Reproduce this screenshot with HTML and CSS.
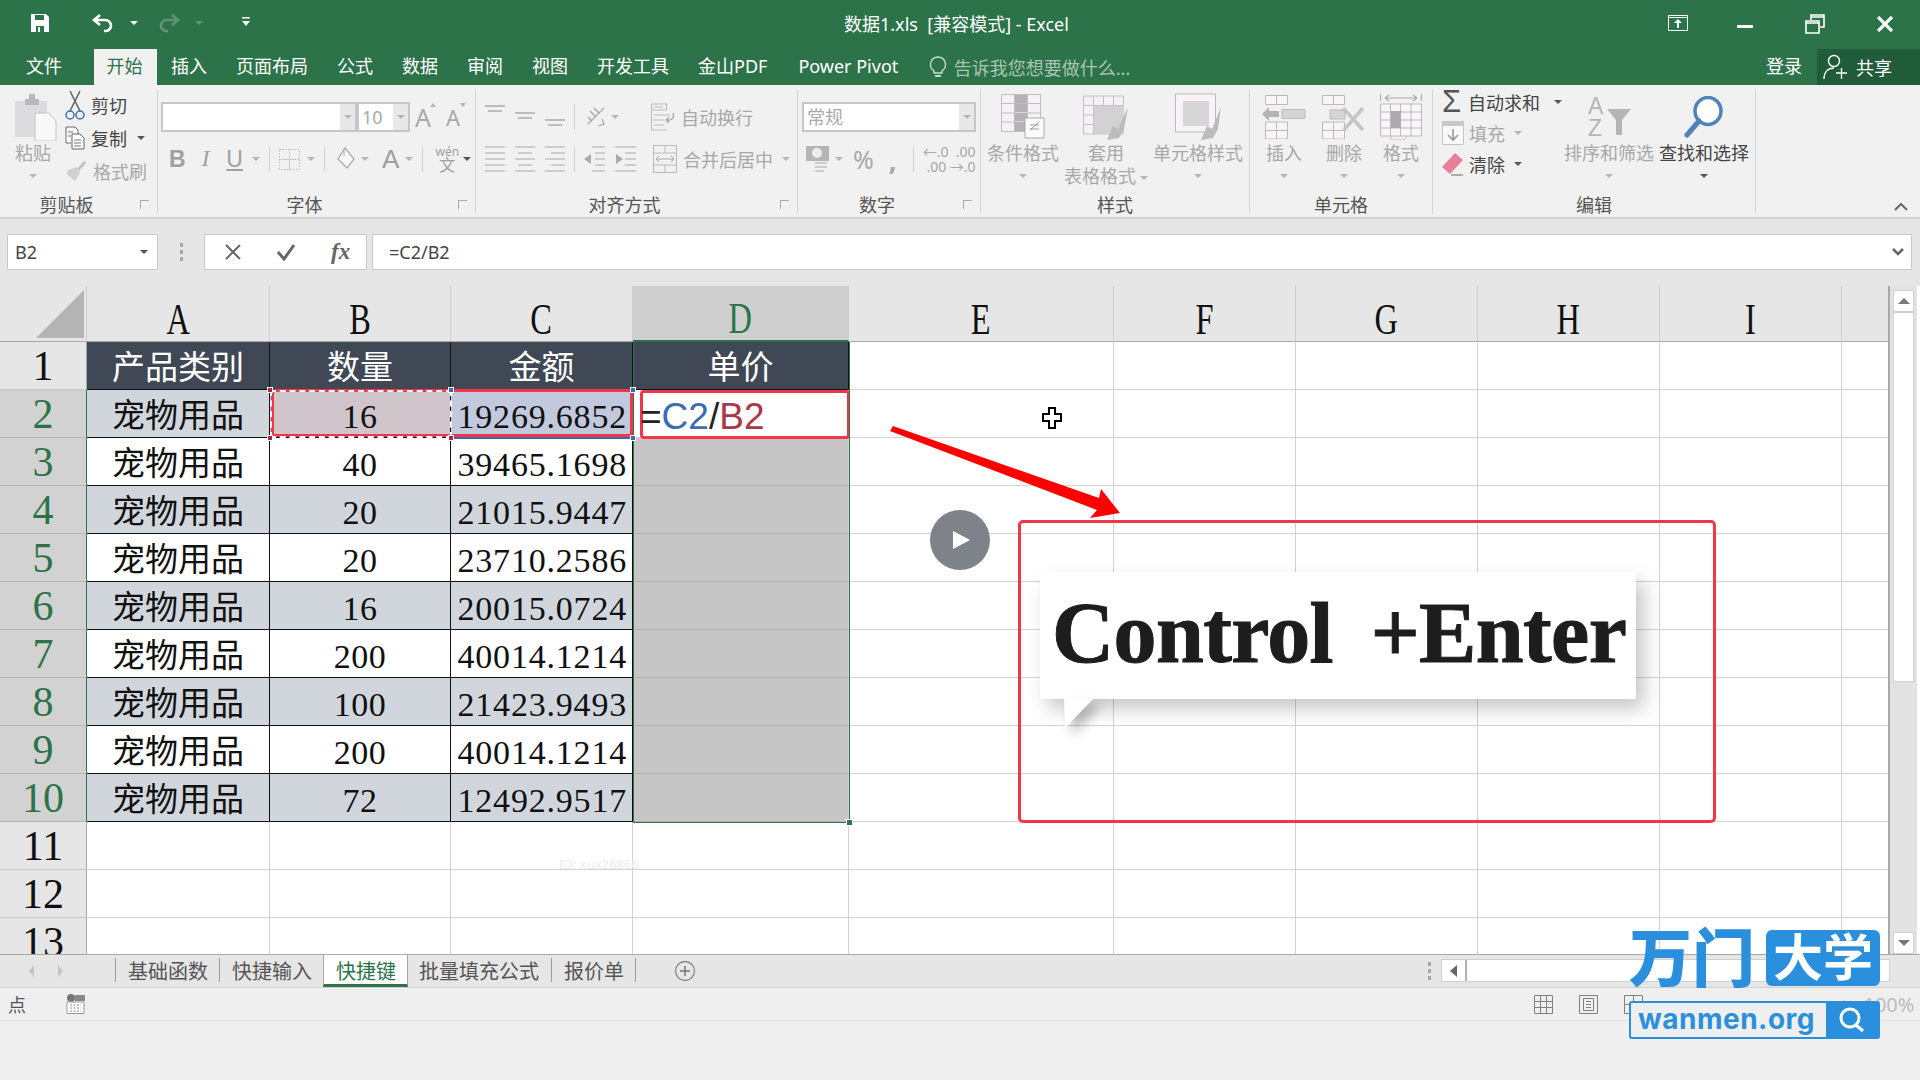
FILE: index.html
```html
<!DOCTYPE html>
<html lang="zh-CN">
<head>
  <meta charset="UTF-8">
  <title>数据1.xls - Excel</title>
  <link rel="stylesheet" href="styles.css">
</head>
<body>
  <!-- title bar -->
  <div class="titlebar">
    <div class="qat">
      <svg class="qat-save" width="20" height="20" viewBox="0 0 20 20"><path d="M1 1h15l3 3v15H1z" fill="#fff"/><path d="M5 2h9v5H5z" fill="#2d734a"/><path d="M6 13h8v6H6z" fill="#2d734a"/><path d="M8 14h2v5H8z" fill="#fff"/></svg>
      <svg class="qat-undo" width="24" height="20" viewBox="0 0 24 20"><path d="M9 2L3 7l6 5M3 7h11c4 0 6 3 6 5.500S18 18 15 18h-2" fill="none" stroke="#fff" stroke-width="2.600"/></svg>
      <span class="caret white qat-c1"></span>
      <svg class="qat-redo" width="24" height="20" viewBox="0 0 24 20"><path d="M15 2l6 5-6 5M21 7H10c-4 0-6 3-6 5.500S6 18 9 18h2" fill="none" stroke="#5f9476" stroke-width="2.600"/></svg>
      <span class="caret dim qat-c2"></span>
      <svg class="qat-more" width="10" height="12" viewBox="0 0 10 12"><path d="M1 1h8v1.500H1z" fill="#fff"/><path d="M1 5h8L5 10z" fill="#fff"/></svg>
    </div>
    <div class="doc-title">数据1.xls&nbsp; [兼容模式] - Excel</div>
    <div class="win-btns">
      <svg class="win-display" width="20" height="16" viewBox="0 0 20 16"><path d="M.5.500h19v15H.5zM.5 2.500h19" fill="none" stroke="#fff"/><path d="M10 4l4 4h-3v5H9V8H6z" fill="#fff"/></svg>
      <svg class="win-min" width="16" height="4" viewBox="0 0 16 4"><path d="M0 0h16v3H0z" fill="#fff"/></svg>
      <svg class="win-restore" width="20" height="20" viewBox="0 0 20 20"><path d="M1 7h13v12H1zM1 9h13M6 6V1h13v12h-4M6 3h13" fill="none" stroke="#fff" stroke-width="1.600"/></svg>
      <svg class="win-close" width="16" height="16" viewBox="0 0 16 16"><path d="M1 1l14 14M15 1L1 15" stroke="#fff" stroke-width="3.200"/></svg>
    </div>
  </div>

  <div class="tabrow">
    <span class="tab">文件</span>
    <span class="tab active">开始</span>
    <span class="tab">插入</span>
    <span class="tab">页面布局</span>
    <span class="tab">公式</span>
    <span class="tab">数据</span>
    <span class="tab">审阅</span>
    <span class="tab">视图</span>
    <span class="tab">开发工具</span>
    <span class="tab">金山PDF</span>
    <span class="tab pivot">Power Pivot</span>
    <span class="tell">
      <svg width="18" height="22" viewBox="0 0 18 22"><path d="M9 1a7.500 7.500 0 0 0-4 13.800V17h8v-2.200A7.500 7.500 0 0 0 9 1z" fill="none" stroke="#c9d9cf" stroke-width="1.400"/><path d="M6 19h6v2H6z" fill="#c9d9cf"/></svg>
      告诉我您想要做什么...
    </span>
    <span class="login">登录</span>
    <span class="share">
      <svg width="25" height="26" viewBox="0 0 25 26"><circle cx="11" cy="7" r="5.500" fill="none" stroke="#fff" stroke-width="1.400"/><path d="M1 25c0-7 4-11 10-11M13 19h11M18.500 14v11" fill="none" stroke="#fff" stroke-width="1.400"/></svg>
      共享
    </span>
  </div>

  <!-- ribbon -->
  <div class="ribbon">
    <div class="group g-clip">
      <div class="group-body">
        <div class="big paste off">
          <div class="big-icon">
            <svg width="42" height="48" viewBox="0 0 42 48"><path d="M0 8h32v36H0z" fill="#dcdcdf"/><path d="M10 6h4V1h6v5h4v6H10z" fill="#b9b9bb"/><path d="M20 20h14l7 8v20H20z" fill="#f8f8f8" stroke="#c4c4c4"/></svg>
          </div>
          <div class="big-text">粘贴</div>
          <span class="caret"></span>
        </div>
        <div class="stack">
          <div class="mini on">
            <svg width="20" height="30" viewBox="0 0 20 30"><path d="M5 1l10 20M15 1L5 21" stroke="#666" stroke-width="1.600"/><circle cx="5" cy="25" r="4" fill="none" stroke="#3c6fb4" stroke-width="1.500"/><circle cx="15" cy="25" r="4" fill="none" stroke="#3c6fb4" stroke-width="1.500"/></svg>
            剪切
          </div>
          <div class="mini on">
            <svg width="20" height="24" viewBox="0 0 20 24"><path d="M1 1h9l3 3v4M1 1v16h5" fill="#fff" stroke="#666"/><path d="M7 8h8l4 4v11H7z" fill="#fff" stroke="#666"/><path d="M9 14h7M9 17h7M9 20h7M3 6h5M3 10h3" stroke="#777"/></svg>
            复制
            <span class="caret dark"></span>
          </div>
          <div class="mini off">
            <svg width="22" height="22" viewBox="0 0 22 22"><path d="M12 9l7-8 2 2-7 8z" fill="#c2c2c2"/><path d="M3 10l8-3 4 6-5 8-8-7z" fill="#d0d0d0"/></svg>
            格式刷
          </div>
        </div>
      </div>
      <div class="group-label launch">剪贴板<span class="launcher"></span></div>
    </div>

    <div class="group g-font">
      <div class="group-body rows">
        <div class="line">
          <div class="combo font-combo"><span class="combo-val"></span><span class="combo-btn"><span class="caret"></span></span></div>
          <div class="combo size-combo"><span class="combo-val">10</span><span class="combo-btn"><span class="caret"></span></span></div>
          <span class="glyph grow">A<i class="tri up"></i></span>
          <span class="glyph shrink">A<i class="tri down"></i></span>
        </div>
        <div class="line second">
          <b class="fmt b">B</b>
          <i class="fmt i">I</i>
          <u class="fmt u">U</u>
          <span class="caret"></span>
          <span class="vsep"></span>
          <svg class="border-ic" width="21" height="21" viewBox="0 0 21 21"><path d="M.5.500h20v20H.5zM.5 10.500h20M10.500.500v20" fill="none" stroke="#bbb" stroke-dasharray="1.500 1.500"/><path d="M10.500 6v15M5 10.500h11" stroke="#c8c8c8"/></svg>
          <span class="caret"></span>
          <span class="vsep"></span>
          <svg class="fill-ic" width="20" height="24" viewBox="0 0 20 24"><path d="M9 1l9 11-7 9-9-9z" fill="#f8f8f8" stroke="#aaa" stroke-width="1.300"/><path d="M8 2v7" stroke="#aaa"/></svg>
          <span class="caret"></span>
          <span class="fmt acolor">A</span>
          <span class="caret"></span>
          <span class="vsep"></span>
          <span class="wen"><em>wén</em>文</span>
          <span class="caret dark"></span>
        </div>
      </div>
      <div class="group-label launch">字体<span class="launcher"></span></div>
    </div>

    <div class="group g-align">
      <div class="group-body rows">
        <div class="line">
          <svg width="80" height="26" viewBox="0 0 80 26"><path d="M0 2h20M3 7h14M30 9h20M33 14h14M60 16h20M63 21h14" stroke="#aaa" stroke-width="1.300"/></svg>
          <span class="vsep tall"></span>
          <svg class="orient" width="22" height="24" viewBox="0 0 22 24"><path d="M3 19L19 3M3 23h0" stroke="#aaa" stroke-width="1.300" fill="none"/><path d="M5 6l6 6M9 3l5 5M3 12l4 4" stroke="#aaa" stroke-width="1.600"/><path d="M13 21l6-2-2-5" fill="none" stroke="#aaa" stroke-width="1.300"/></svg>
          <span class="caret"></span>
          <span class="vsep tall wrap-sep"></span>
          <div class="mini off wrap">
            <svg width="24" height="28" viewBox="0 0 24 28"><path d="M.5 1h15v6H.5zM.5 1v26h15M3 4h9M3 12h16M3 17h10M3 22h10" fill="none" stroke="#bbb" stroke-width="1.100"/><path d="M22 10c2 5-2 8-7 7m3-3l-3 3 3 3" fill="none" stroke="#aaa" stroke-width="1.400"/></svg>
            自动换行
          </div>
        </div>
        <div class="line second">
          <svg width="80" height="28" viewBox="0 0 80 28"><path d="M0 2h20M0 8h20M0 14h20M0 20h20M0 26h20M30 2h20M33 8h14M30 14h20M33 20h14M30 26h20M60 2h20M66 8h14M60 14h20M66 20h14M60 26h20" stroke="#aaa" stroke-width="1.200"/></svg>
          <span class="vsep tall"></span>
          <svg class="indent" width="52" height="28" viewBox="0 0 52 28"><path d="M8 2h13M11 8h10M11 14h10M11 20h10M8 26h13M31 2h21M41 8h11M41 14h11M41 20h11M31 26h21" stroke="#aaa" stroke-width="1.200"/><path d="M0 14l7-5v10zM39 14l-7-5v10z" fill="#aaa"/></svg>
          <div class="mini off merge">
            <svg width="24" height="28" viewBox="0 0 24 28"><path d="M.5.500h23v27H.5zM.5 8h23M.5 20h23M12 .500V8M12 20v8" fill="none" stroke="#bbb" stroke-width="1.100"/><path d="M3 14h18M6 11l-3 3 3 3M18 11l3 3-3 3" fill="none" stroke="#aaa"/></svg>
            合并后居中
            <span class="caret"></span>
          </div>
        </div>
      </div>
      <div class="group-label launch">对齐方式<span class="launcher"></span></div>
    </div>

    <div class="group g-num">
      <div class="group-body rows">
        <div class="line">
          <div class="combo num-combo"><span class="combo-val">常规</span><span class="combo-btn"><span class="caret"></span></span></div>
        </div>
        <div class="line second">
          <svg class="money" width="23" height="26" viewBox="0 0 23 26"><path d="M0 0h23v15H0z" fill="#b5b5b5"/><circle cx="11" cy="7" r="5" fill="#eee"/><path d="M9 16h12v2H9zM9 20h12v2H9zM9 24h9v2H9z" fill="#ccc"/></svg>
          <span class="caret"></span>
          <span class="pct">%</span>
          <span class="comma">,</span>
          <span class="vsep"></span>
          <span class="dec"><span><em>←</em>.0 &nbsp;.00</span><span>.00 <em>→</em>.0</span></span>
        </div>
      </div>
      <div class="group-label launch">数字<span class="launcher"></span></div>
    </div>

    <div class="group g-style">
      <div class="group-body">
        <div class="big off w-cond">
          <div class="big-icon">
            <svg width="44" height="46" viewBox="0 0 44 46"><path d="M.5.500h39v37H.5zM13.500.500v37M26.500.500v37M.5 9.500h39M.5 19h39M.5 28h39" fill="#f6f1f5" stroke="#c3bdc3"/><path d="M14 1h12v8H14zM14 10h12v8H14zM14 19h12v8H14zM14 28h12v9H14z" fill="#b3b3b3"/><path d="M24 24h19v20H24z" fill="#fbfbfb" stroke="#aaa"/><path d="M29 36l9-8M29 31h9M29 35h9" stroke="#999"/></svg>
          </div>
          <div class="big-text">条件格式</div>
          <span class="caret"></span>
        </div>
        <div class="big off w-table">
          <div class="big-icon">
            <svg width="46" height="48" viewBox="0 0 46 48"><path d="M.5 3h40v38H.5zM10.500 3v38M20.500 3v38M30.500 3v38M.5 12.500h40M.5 22h40M.5 31.500h40" fill="#f5f1f4" stroke="#c6c0c6"/><path d="M11 13h30v28H11z" fill="#d2d2d2"/><path d="M24 47l6-14 5 3 10-22-4 22-5 9z" fill="#bcbcbc"/></svg>
          </div>
          <div class="big-text">套用</div>
          <div class="big-text">表格格式<span class="caret"></span></div>
        </div>
        <div class="big off w-cell">
          <div class="big-icon">
            <svg width="46" height="48" viewBox="0 0 46 48"><path d="M.5 1h40v38H.5z" fill="#f8f3f7" stroke="#bbb"/><path d="M8 8h26v25H8z" fill="#d6d6d6"/><path d="M26 47l6-14 5 3 9-22-3 22-5 9z" fill="#bcbcbc"/></svg>
          </div>
          <div class="big-text">单元格样式</div>
          <span class="caret"></span>
        </div>
      </div>
      <div class="group-label">样式</div>
    </div>

    <div class="group g-cells">
      <div class="group-body">
        <div class="big off w-ins">
          <div class="big-icon">
            <svg width="44" height="44" viewBox="0 0 44 44"><path d="M3.500.500h22v9h-22zM14.500.500v9M3.500 27h22v17h-22zM3.500 35.500h22M14.500 27v17" fill="#f8f4f7" stroke="#bbb"/><path d="M20 14.500h23v9H20z" fill="#d5d5d5" stroke="#bbb"/><path d="M0 19l7-7v4h10v6H7v4z" fill="#b4b4b4"/></svg>
          </div>
          <div class="big-text">插入</div>
          <span class="caret"></span>
        </div>
        <div class="big off w-del">
          <div class="big-icon">
            <svg width="44" height="44" viewBox="0 0 44 44"><path d="M.5.500h22v9H.5zM11.500.500v9M.5 27h22v17H.5zM.5 35.500h22M11.500 27v17" fill="#f8f4f7" stroke="#bbb"/><path d="M8 15h15v9H8z" fill="#d5d5d5" stroke="#bbb"/><path d="M21 13l20 22M41 13L22 35" stroke="#c4c4c4" stroke-width="3.500"/></svg>
          </div>
          <div class="big-text">删除</div>
          <span class="caret"></span>
        </div>
        <div class="big off w-fmt">
          <div class="big-icon">
            <svg width="42" height="46" viewBox="0 0 42 46"><path d="M.5 0v7M41.500 0v7M5 4h32M5 4l4-3M5 4l4 3M37 4l-4-3M37 4l-4 3" fill="none" stroke="#aaa" stroke-width="1.200"/><path d="M.5 10h41v32H.5zM10.500 10v32M20.500 10v32M31 10v32M.5 18h41M.5 26h41M.5 34h41" fill="#f8f4f7" stroke="#bbb"/><path d="M11 17h10v17H11z" fill="#ababab"/><path d="M10 42l2 4h12l3-4" fill="none" stroke="#bbb"/></svg>
          </div>
          <div class="big-text">格式</div>
          <span class="caret"></span>
        </div>
      </div>
      <div class="group-label">单元格</div>
    </div>

    <div class="group g-edit">
      <div class="group-body">
        <div class="stack edit-stack">
          <div class="mini on">
            <span class="sigma">Σ</span>
            自动求和
            <span class="caret dark sum-caret"></span>
          </div>
          <div class="mini off">
            <svg width="22" height="24" viewBox="0 0 22 24"><path d="M.5.500h21v23H.5z" fill="#f9f9f9" stroke="#c4c4c4"/><path d="M0 0h22v5H0z" fill="#c8c8c8"/><path d="M11 8v11M6 14l5 5 5-5" fill="none" stroke="#999" stroke-width="1.600"/></svg>
            填充
            <span class="caret"></span>
          </div>
          <div class="mini on">
            <svg width="22" height="24" viewBox="0 0 22 24"><path d="M0 15L13 1l8 7-13 14z" fill="#e58098"/><path d="M9 23h12" stroke="#666"/></svg>
            清除
            <span class="caret dark"></span>
          </div>
        </div>
        <div class="big off w-sort">
          <div class="big-icon">
            <svg width="44" height="44" viewBox="0 0 44 44"><path d="M20 14h24l-9 11v15h-6V25z" fill="#b5b5b5"/></svg>
            <span class="az">A<br>Z</span>
          </div>
          <div class="big-text">排序和筛选</div>
          <span class="caret"></span>
        </div>
        <div class="big on w-find">
          <div class="big-icon">
            <svg width="40" height="42" viewBox="0 0 40 42"><ellipse cx="24" cy="15" rx="13" ry="13.500" fill="#fff" stroke="#4f82b8" stroke-width="3.500"/><path d="M15 25L3 39" stroke="#4f82b8" stroke-width="5" stroke-linecap="round"/></svg>
          </div>
          <div class="big-text">查找和选择</div>
          <span class="caret dark"></span>
        </div>
      </div>
      <div class="group-label">编辑</div>
    </div>
    <svg class="collapse" width="14" height="9" viewBox="0 0 14 9"><path d="M1 8l6-6 6 6" fill="none" stroke="#666" stroke-width="2"/></svg>
  </div>

  <!-- formula bar -->
  <div class="formula-bar">
    <div class="namebox">B2<span class="caret dark"></span></div>
    <div class="grip"><i></i><i></i><i></i></div>
    <div class="fx-btns">
      <svg width="18" height="18" viewBox="0 0 18 18"><path d="M2 2l14 14M16 2L2 16" stroke="#666" stroke-width="2"/></svg>
      <svg width="20" height="18" viewBox="0 0 20 18"><path d="M2 9l6 7L18 2" fill="none" stroke="#666" stroke-width="3"/></svg>
      <span class="fx">fx</span>
    </div>
    <div class="formula-input">=C2/B2
      <svg width="12" height="9" viewBox="0 0 12 9"><path d="M1 1l5 5 5-5" fill="none" stroke="#666" stroke-width="2.500"/></svg>
    </div>
  </div>

  <!-- sheet -->
  <div class="sheet-wrap">
    <div class="sheet">
      <table class="grid">
        <colgroup>
          <col class="c-hd"><col class="c-a"><col class="c-b"><col class="c-c"><col class="c-d"><col class="c-e"><col class="c-n"><col class="c-n"><col class="c-n"><col class="c-n"><col class="c-r">
        </colgroup>
        <tr class="col-head">
          <th class="corner"><span class="corner-tri"></span></th>
          <th><span>A</span></th><th><span>B</span></th><th><span>C</span></th><th class="sel"><span>D</span></th><th><span>E</span></th><th><span>F</span></th><th><span>G</span></th><th><span>H</span></th><th><span>I</span></th><th></th>
        </tr>
        <tr class="head-row"><th class="rn">1</th><td>产品类别</td><td>数量</td><td>金额</td><td class="lastd">单价</td><td></td><td></td><td></td><td></td><td></td><td></td></tr>
        <tr class="odd"><th class="rn sel">2</th><td class="cat">宠物用品</td><td class="num b2">16</td><td class="amt c2">19269.6852</td><td class="d2"></td><td></td><td></td><td></td><td></td><td></td><td></td></tr>
        <tr><th class="rn sel">3</th><td class="cat">宠物用品</td><td class="num">40</td><td class="amt">39465.1698</td><td class="dsel"></td><td></td><td></td><td></td><td></td><td></td><td></td></tr>
        <tr class="odd"><th class="rn sel">4</th><td class="cat">宠物用品</td><td class="num">20</td><td class="amt">21015.9447</td><td class="dsel"></td><td></td><td></td><td></td><td></td><td></td><td></td></tr>
        <tr><th class="rn sel">5</th><td class="cat">宠物用品</td><td class="num">20</td><td class="amt">23710.2586</td><td class="dsel"></td><td></td><td></td><td></td><td></td><td></td><td></td></tr>
        <tr class="odd"><th class="rn sel">6</th><td class="cat">宠物用品</td><td class="num">16</td><td class="amt">20015.0724</td><td class="dsel"></td><td></td><td></td><td></td><td></td><td></td><td></td></tr>
        <tr><th class="rn sel">7</th><td class="cat">宠物用品</td><td class="num">200</td><td class="amt">40014.1214</td><td class="dsel"></td><td></td><td></td><td></td><td></td><td></td><td></td></tr>
        <tr class="odd"><th class="rn sel">8</th><td class="cat">宠物用品</td><td class="num">100</td><td class="amt">21423.9493</td><td class="dsel"></td><td></td><td></td><td></td><td></td><td></td><td></td></tr>
        <tr><th class="rn sel">9</th><td class="cat">宠物用品</td><td class="num">200</td><td class="amt">40014.1214</td><td class="dsel"></td><td></td><td></td><td></td><td></td><td></td><td></td></tr>
        <tr class="odd"><th class="rn sel">10</th><td class="cat">宠物用品</td><td class="num">72</td><td class="amt">12492.9517</td><td class="dsel"></td><td></td><td></td><td></td><td></td><td></td><td></td></tr>
        <tr><th class="rn">11</th><td></td><td></td><td></td><td></td><td></td><td></td><td></td><td></td><td></td><td></td></tr>
        <tr><th class="rn">12</th><td></td><td></td><td></td><td></td><td></td><td></td><td></td><td></td><td></td><td></td></tr>
        <tr><th class="rn">13</th><td></td><td></td><td></td><td></td><td></td><td></td><td></td><td></td><td></td><td></td></tr>
      </table>
    </div>
    <div class="vscroll">
      <div class="vbtn"><span class="tri-up"></span></div>
      <div class="vthumb"></div>
      <div class="vtrack"></div>
      <div class="vbtn"><span class="tri-down"></span></div>
    </div>
  </div>

  <!-- sheet tabs -->
  <div class="sheet-tabs">
    <div class="tab-nav"><span class="nav-l"></span><span class="nav-r"></span></div>
    <span class="stab">基础函数</span>
    <span class="stab">快捷输入</span>
    <span class="stab current">快捷键</span>
    <span class="stab">批量填充公式</span>
    <span class="stab">报价单</span>
    <svg class="add-sheet" width="22" height="22" viewBox="0 0 22 22"><circle cx="11" cy="11" r="9.500" fill="none" stroke="#888" stroke-width="1.300"/><path d="M11 6v10M6 11h10" stroke="#777" stroke-width="1.500"/></svg>
    <div class="grip tabs-grip"><i></i><i></i><i></i></div>
    <div class="hscroll"><span class="hbtn"><span class="nav-l dark"></span></span><span class="hthumb"></span></div>
  </div>

  <!-- status bar -->
  <div class="statusbar">
    <span class="st-mode">点</span>
    <svg class="st-calc" width="19" height="20" viewBox="0 0 19 20"><circle cx="5" cy="4" r="4" fill="#777"/><path d="M9 1h10v6H9z" fill="#888"/><path d="M1 8h17v11.500H1z" fill="#fff" stroke="#999"/><path d="M4 11h11M4 14h11M4 17h11" stroke="#888" stroke-dasharray="2 1.500"/></svg>
    <div class="views">
      <svg width="19" height="19" viewBox="0 0 19 19"><path d="M.5.500h18v18H.5zM6.500.500v18M12.500.500v18M.5 6.500h18M.5 12.500h18" fill="none" stroke="#808080"/></svg>
      <svg width="19" height="19" viewBox="0 0 19 19"><path d="M.5.500h18v18H.5zM4.500 3.500h10v12h-10zM7 6.500h5M7 9.500h5M7 12.500h5" fill="none" stroke="#808080"/></svg>
      <svg width="19" height="19" viewBox="0 0 19 19"><path d="M.5.500h18v18H.5zM9.500.500v9M.5 9.500h18" fill="none" stroke="#808080"/></svg>
    </div>
    <span class="st-plus">+</span>
    <span class="st-zoom">100%</span>
  </div>

  <!-- annotations on top of the video frame -->
  <div class="mark c2-line"></div>
  <div class="mark red-range"></div>
  <div class="mark ant"></div>
  <div class="mark red-cell">=<span class="ref-c">C2</span>/<span class="ref-b">B2</span></div>
  <div class="mark sel-box"></div>
  <span class="handle h-a"></span><span class="handle h-b"></span><span class="handle h-c"></span>
  <span class="handle blue h-d"></span><span class="handle blue h-e"></span><span class="handle blue h-f"></span>
  <span class="handle green h-g"></span>

  <svg class="cursor" width="20" height="22" viewBox="0 0 20 22"><path d="M7 1h6v6h6v7h-6v7H7v-7H1V7h6z" fill="#fff" stroke="#000" stroke-width="2"/></svg>

  <svg class="arrow" width="240" height="100" viewBox="0 0 240 100"><path d="M3 0L209 72l2-9 19 24-30 5 7-8L0 5z" fill="#f00"/></svg>

  <div class="play"><span></span></div>

  <div class="red-box"></div>
  <div class="callout">Control&nbsp; +Enter</div>
  <svg class="callout-tail" width="40" height="32" viewBox="0 0 40 32"><path d="M1 0h30L2 30z" fill="#fff"/></svg>

  <div class="watermark">ID: xux26866</div>

  <div class="logo">
    <div class="logo-top"><span class="logo-name">万门</span><span class="logo-box">大学</span></div>
    <div class="logo-site">
      <span class="logo-url">wanmen.org</span>
      <span class="logo-search"><svg width="28" height="28" viewBox="0 0 28 28"><circle cx="12" cy="12" r="9" fill="none" stroke="#fff" stroke-width="3"/><path d="M18 19l7 6" stroke="#fff" stroke-width="3.500"/></svg></span>
    </div>
  </div>
</body>
</html>
```

FILE: styles.css
```css
* {
  box-sizing: border-box;
}

html, body {
  margin: 0;
  padding: 0;
}

body {
  position: relative;
  width: 1920px;
  height: 1080px;
  overflow: hidden;
  background: #efefef;
  font-family: "Noto Sans", "Noto Sans CJK SC", sans-serif;
  font-size: 18px;
  color: #444;
}

/* title bar */
.titlebar {
  position: relative;
  height: 49px;
  background: #2d734a;
  display: flex;
}

.qat {
  width: 300px;
  padding-left: 30px;
  padding-top: 13px;
  display: flex;
  align-items: flex-start;
}

.qat-undo { margin-left: 41px; }
.qat-c1 { margin: 8px 0 0 15px; }
.qat-redo { margin-left: 19px; }
.qat-c2 { margin: 8px 0 0 14px; }
.qat-more { margin: 3px 0 0 38px; }

.doc-title {
  position: absolute;
  left: 844px;
  top: 10px;
  line-height: 28px;
  color: #fff;
  white-space: nowrap;
}

.win-btns {
  margin-left: auto;
  display: flex;
  padding-top: 14px;
  align-items: flex-start;
}

.win-display { margin-right: 49px; margin-top: 1px; }
.win-min { margin-right: 52px; margin-top: 11px; }
.win-restore { margin-right: 52px; }
.win-close { margin-right: 27px; margin-top: 2px; }

.tabrow {
  height: 36px;
  background: #2d734a;
  display: flex;
  padding-left: 11px;
  color: #fff;
}

.tab {
  padding: 0 14.500px;
  line-height: 35px;
  white-space: nowrap;
}

.tab:first-child { padding-left: 15px; }
.tab.pivot { margin-left: 2px; }

.tab.active {
  margin-left: 17px;
  padding: 0 14px 0 13px;
  background: #f1f1f1;
  color: #2d734a;
}

.tell {
  margin-left: 16px;
  display: flex;
  align-items: center;
  gap: 7px;
  color: #a9c4b4;
}

.login {
  margin-left: auto;
  line-height: 35px;
}

.share {
  margin-left: 15px;
  width: 103px;
  background: #205c39;
  display: flex;
  align-items: center;
  gap: 8px;
  padding-left: 6px;
}

/* carets */
.caret {
  display: inline-block;
  width: 0;
  height: 0;
  border-left: 4px solid transparent;
  border-right: 4px solid transparent;
  border-top: 4px solid #b5b5b5;
}

.caret.white { border-top-color: #fff; }
.caret.dim { border-top-color: #5f9476; }
.caret.dark { border-top-color: #555; }

/* ribbon */
.ribbon {
  position: relative;
  height: 134px;
  background: #f1f1f1;
  border-bottom: 2px solid #d2d2d2;
  display: flex;
  padding-top: 4px;
}

.group {
  height: 125px;
  border-right: 1px solid #d4d4d4;
  display: flex;
  flex-direction: column;
}

.g-clip { width: 158px; }
.g-font { width: 318px; }
.g-align { width: 322px; }
.g-num { width: 183px; }
.g-style { width: 269px; }
.g-cells { width: 183px; }
.g-edit { width: 323px; }

.group-body {
  height: 103px;
  flex-shrink: 0;
  display: flex;
  padding-top: 3px;
}

.group-body.rows {
  flex-direction: column;
  padding-top: 13px;
  padding-left: 3px;
}

.group-label {
  position: relative;
  height: 22px;
  text-align: center;
  line-height: 26px;
  color: #555;
}

.group-label.launch {
  padding-right: 24px;
}

.launcher {
  position: absolute;
  right: 8px;
  top: 8px;
  width: 9px;
  height: 9px;
  border-left: 1px solid #aaa;
  border-top: 1px solid #aaa;
}

.big {
  display: flex;
  flex-direction: column;
  align-items: center;
}

.big.off { color: #a8a8a8; }
.big.on { color: #444; }

.big-icon {
  position: relative;
  height: 50px;
  display: flex;
  align-items: center;
  justify-content: center;
}

.big-text {
  line-height: 23px;
  white-space: nowrap;
}

.big > .caret {
  margin-top: 9px;
}

.big-text .caret {
  margin-left: 4px;
  vertical-align: middle;
}

.paste { width: 52px; margin-left: 7px; margin-right: 6px; }
.paste svg { margin-left: 5px; }

.stack {
  display: flex;
  flex-direction: column;
  margin-top: -4px;
}

.mini {
  height: 33px;
  display: flex;
  align-items: center;
  gap: 6px;
  white-space: nowrap;
}

.mini.off { color: #a8a8a8; }
.mini.on { color: #444; }
.mini .caret { margin-left: 4px; }

.line {
  height: 30px;
  display: flex;
  align-items: center;
}

.line.second {
  margin-top: 12px;
}

.combo {
  height: 30px;
  border: 2px solid #c6c6c6;
  background: #fff;
  display: flex;
  color: #a8a8a8;
}

.combo-val {
  flex: 1;
  line-height: 26px;
  padding-left: 3px;
}

.combo-btn {
  width: 15px;
  background: #e8e8e8;
  display: flex;
  align-items: center;
  justify-content: center;
}

.font-combo { width: 196px; }
.size-combo { width: 53px; margin-left: 0; }
.num-combo { width: 174px; margin-left: 1px; }

.glyph {
  position: relative;
  color: #a8a8a8;
  line-height: 30px;
}

.grow { font-size: 25px; margin-left: 5px; width: 20px; }
.shrink { font-size: 22px; margin-left: 11px; width: 20px; }

.tri {
  position: absolute;
  width: 0;
  height: 0;
  border-left: 3px solid transparent;
  border-right: 3px solid transparent;
  right: -2px;
  top: 1px;
}

.tri.up { border-bottom: 4px solid #b5b5b5; right: -1px; }
.tri.down { border-top: 4px solid #b5b5b5; right: 0; }

.fmt {
  color: #a0a0a0;
  font-size: 23px;
  font-family: "Liberation Sans", sans-serif;
  font-style: normal;
}

.fmt.b { margin-left: 8px; font-weight: bold; }
.fmt.i { margin-left: 16px; font-style: italic; font-family: "Liberation Serif", serif; }
.fmt.u { margin-left: 17px; }
.fmt.u + .caret { margin-left: 9px; }

.vsep {
  width: 1px;
  height: 26px;
  background: #d2d2d2;
  margin: 0 9px;
}

.second .border-ic + .caret { margin-left: 7px; }
.fill-ic { margin-left: 2px; }
.fill-ic + .caret { margin-left: 5px; }
.acolor { margin-left: 13px; font-size: 26px; }
.acolor + .caret { margin-left: 6px; }

.wen {
  width: 26px;
  display: flex;
  flex-direction: column;
  align-items: center;
  font-size: 16px;
  line-height: 15px;
  color: #a0a0a0;
  margin-left: 2px;
}

.wen em {
  font-style: normal;
  font-size: 12px;
  line-height: 12px;
}

.g-font .wen + .caret { margin-left: 3px; }

.g-align .group-body { padding-left: 9px; }
.orient { margin-left: 1px; }
.orient + .caret { margin-left: 4px; }
.wrap-sep { margin-left: 18px; margin-right: 16px; height: 40px; visibility: hidden; }
.wrap { margin-left: -3px; }
.indent { margin-left: 0; }
.merge { margin-left: 17px; }
.merge .caret { margin-left: 3px; }

.money { margin-left: 5px; }
.money + .caret { margin-left: 6px; }
.pct { margin-left: 10px; font-size: 25px; color: #a8a8a8; }
.comma { margin-left: 15px; font-size: 28px; font-weight: bold; color: #a8a8a8; line-height: 20px; }
.g-num .vsep { margin: 0 9px 0 16px; }

.dec {
  display: flex;
  flex-direction: column;
  font-size: 14px;
  line-height: 15px;
  color: #a8a8a8;
  white-space: nowrap;
}

.dec em { font-style: normal; }
.dec span + span { text-align: right; }

.w-cond { width: 76px; margin-left: 4px; }
.w-table { width: 76px; margin-left: 7px; }
.w-cell { width: 92px; margin-left: 8px; }

.w-ins { width: 44px; margin-left: 12px; }
.w-del { width: 44px; margin-left: 16px; }
.w-fmt { width: 44px; margin-left: 13px; }

.edit-stack { margin-left: 9px; width: 123px; margin-top: -6px; }
.edit-stack .mini { height: 31px; gap: 5px; }

.sigma {
  width: 21px;
  font-size: 31px;
  line-height: 28px;
  color: #555;
  font-family: "Liberation Sans", sans-serif;
}

.sum-caret { margin-left: 9px !important; }

.w-sort { width: 90px; margin-left: -1px; }
.w-find { width: 94px; margin-left: 3px; }

.az {
  position: absolute;
  left: 1px;
  top: 3px;
  font-size: 23px;
  line-height: 22px;
  color: #b5b5b5;
  font-family: "Liberation Sans", sans-serif;
}

.collapse {
  position: absolute;
  left: 1894px;
  top: 117px;
}

/* formula bar */
.formula-bar {
  height: 67px;
  background: #e6e6e6;
  display: flex;
  align-items: flex-start;
  padding: 15px 8px 0 7px;
}

.namebox {
  width: 151px;
  height: 36px;
  background: #fff;
  border: 1px solid #c8c8c8;
  line-height: 34px;
  padding-left: 7px;
  display: flex;
  justify-content: space-between;
  align-items: center;
  padding-right: 9px;
}

.grip {
  width: 46px;
  height: 36px;
  display: flex;
  flex-direction: column;
  align-items: center;
  justify-content: center;
  gap: 3px;
}

.grip i {
  width: 3px;
  height: 4px;
  background: #a6a6a6;
}

.fx-btns {
  width: 163px;
  height: 36px;
  background: #fff;
  border: 1px solid #c8c8c8;
  display: flex;
  align-items: center;
  padding-left: 19px;
  gap: 34px;
}

.fx {
  font-family: "Liberation Serif", serif;
  font-style: italic;
  font-weight: bold;
  font-size: 23px;
  color: #666;
  margin-left: 1px;
}

.formula-input {
  flex: 1;
  height: 36px;
  margin-left: 5px;
  background: #fff;
  border: 1px solid #c8c8c8;
  line-height: 34px;
  padding: 0 7px 0 16px;
  display: flex;
  justify-content: space-between;
  align-items: center;
}

/* sheet */
.sheet-wrap {
  height: 668px;
  display: flex;
  background: #fff;
}

.sheet {
  width: 1890px;
  overflow: hidden;
  border-right: 2px solid #a8a8a8;
}

.grid {
  table-layout: fixed;
  width: 1890px;
  border-collapse: separate;
  border-spacing: 0;
  font-family: "Liberation Serif", "Noto Sans CJK SC", serif;
  color: #111;
}

.c-hd { width: 87px; }
.c-a { width: 183px; }
.c-b { width: 181px; }
.c-c { width: 182px; }
.c-d { width: 216px; }
.c-e { width: 265px; }
.c-n { width: 182px; }
.c-r { width: 48px; }

.grid td, .grid th {
  height: 48px;
  padding: 0;
  font-weight: normal;
  line-height: 38px;
  border-right: 1px solid #d2d2d2;
  border-bottom: 1px solid #d2d2d2;
  overflow: hidden;
  white-space: nowrap;
}

.col-head th {
  height: 56px;
  background: #e6e6e6;
  border-right: 1px solid #cdcdcd;
  border-bottom: 1px solid #a8a8a8;
  vertical-align: bottom;
  text-align: center;
}

.col-head th span {
  display: inline-block;
  font-size: 45px;
  line-height: 50px;
  transform: translateY(6px) scaleX(.72);
}

.col-head th.sel {
  background: #cfcfcf;
  color: #2d734a;
  border-bottom: 2px solid #2d734a;
}

.col-head th.corner {
  position: relative;
  background: #e6e6e6;
}

.corner-tri {
  position: absolute;
  left: 36px;
  bottom: 3px;
  width: 0 !important;
  height: 0;
  transform: none !important;
  border-left: 48px solid transparent;
  border-bottom: 48px solid #b5b5b5;
}

.grid th.rn {
  background: #e6e6e6;
  font-size: 42px;
  line-height: 40px;
  text-align: center;
  border-right: 1px solid #a8a8a8;
  border-bottom: 1px solid #c8c8c8;
}

.grid th.rn.sel {
  background: #d2d2d2;
  color: #2d734a;
  border-right: 1px solid #2d734a;
  border-bottom: 1px solid #b5b5b5;
}

.grid .head-row td:nth-child(-n+5) {
  padding-top: 5px;
  background: #3f4854;
  color: #fff;
  font-size: 33px;
  text-align: center;
  border-right: 1px solid #111;
  border-bottom: 1px solid #111;
}

.cat, .num, .amt {
  padding-top: 5px !important;
  border-right: 1px solid #111 !important;
  border-bottom: 1px solid #111 !important;
}

.cat, .num {
  text-align: center;
  font-size: 33px;
}

.num { font-size: 34px; letter-spacing: .5px; padding-top: 7px !important; }

.amt {
  text-align: right;
  font-size: 34px;
  letter-spacing: .8px;
  padding-top: 7px !important;
  padding-right: 5px !important;
}

.odd .cat, .odd .num, .odd .amt { background: #d0d6dc; }
.odd .b2 { background: #d0c5ca; }
.odd .c2 { background: #c2c9dc; }

.dsel {
  background: #c6c6c6;
  border-bottom: 1px solid #b2b2b2 !important;
}

.d2 { background: #fff; }

/* vertical scrollbar */
.vscroll {
  width: 30px;
  background: #e2e2e2;
  padding: 4px 3px 0 3px;
  display: flex;
  flex-direction: column;
  border-right: 3px solid #fff;
}

.vbtn {
  height: 22px;
  background: #fff;
  border: 1px solid #d0d0d0;
  display: flex;
  align-items: center;
  justify-content: center;
  flex-shrink: 0;
}

.vthumb {
  height: 370px;
  background: #fff;
  border: 1px solid #d0d0d0;
}

.vtrack { flex: 1; }

.tri-up, .tri-down {
  width: 0;
  height: 0;
  border-left: 6px solid transparent;
  border-right: 6px solid transparent;
}

.tri-up { border-bottom: 6px solid #777; }
.tri-down { border-top: 6px solid #777; }

/* sheet tabs */
.sheet-tabs {
  height: 34px;
  background: #e6e6e6;
  border-top: 1px solid #a8a8a8;
  border-bottom: 1px solid #cfcfcf;
  display: flex;
  align-items: stretch;
  font-size: 20px;
  color: #555;
}

.tab-nav {
  width: 115px;
  display: flex;
  align-items: center;
  padding-left: 29px;
  gap: 24px;
}

.nav-l, .nav-r {
  width: 0;
  height: 0;
  border-top: 6px solid transparent;
  border-bottom: 6px solid transparent;
}

.nav-l { border-right: 5px solid #c4c4c4; }
.nav-r { border-left: 5px solid #c4c4c4; }
.nav-l.dark { border-right: 7px solid #666; }

.stab {
  position: relative;
  padding: 0 11px 0 12px;
  line-height: 28px;
  white-space: nowrap;
  border-left: 1px solid #9c9c9c;
  margin: 3px 0 5px;
}

.stab.current {
  margin: 0;
  padding: 3px 11px 0 12px;
  background: #fff;
  color: #2d734a;
  border-left: 1px solid #a8a8a8;
  border-right: 1px solid #a8a8a8;
  border-bottom: 3px solid #2d734a;
}

.stab.current + .stab {
  border-left: 0;
  padding: 0 12px 0 11px;
}

.stab:nth-of-type(5) {
  border-right: 1px solid #9c9c9c;
}

.add-sheet {
  align-self: center;
  margin-left: 38px;
}

.tabs-grip {
  width: 24px;
  height: auto;
  margin-left: auto;
}

.hscroll {
  width: 449px;
  margin: 4px 30px 5px 0;
  border: 1px solid #d0d0d0;
  background: #fff;
  display: flex;
}

.hbtn {
  width: 25px;
  display: flex;
  align-items: center;
  justify-content: center;
  border-right: 2px solid #b0b0b0;
}

/* status bar */
.statusbar {
  height: 33px;
  background: #efefef;
  border-bottom: 1px solid #e2e2e2;
  display: flex;
  align-items: center;
  position: relative;
}

.st-mode { margin-left: 8px; color: #555; }
.st-calc { margin-left: 40px; }

.views {
  margin-left: 1449px;
  display: flex;
  gap: 26px;
}

.st-plus {
  margin-left: 195px;
  font-size: 20px;
  color: #b0b0b0;
}

.st-zoom {
  margin-left: 14px;
  font-size: 20px;
  color: #bdbdbd;
}

/* overlays */
.mark, .handle, .cursor, .arrow, .play, .red-box, .callout, .callout-tail, .watermark, .logo {
  position: absolute;
}

.ant {
  left: 270px;
  top: 390px;
  width: 182px;
  height: 48px;
  border: 2px dashed #fff;
}

.c2-line {
  left: 451px;
  top: 437px;
  width: 183px;
  height: 2px;
  background: #3d6bb3;
}

.red-range {
  left: 271px;
  top: 389px;
  width: 362px;
  height: 48px;
  border: 3px solid #f0364a;
  border-radius: 4px;
}

.red-cell {
  left: 640px;
  top: 390px;
  width: 210px;
  height: 49px;
  background: #fff;
  border: 3px solid #f0364a;
  border-radius: 4px;
  font-family: "Liberation Sans", sans-serif;
  font-size: 37px;
  line-height: 47px;
  text-indent: -3px;
  color: #222;
}

.ref-c { color: #3d6bb3; }
.ref-b { color: #a8384a; }

.sel-box {
  left: 633px;
  top: 342px;
  width: 217px;
  height: 481px;
  border: 1px solid #2d734a;
  border-top: 0;
  pointer-events: none;
}

.handle {
  width: 6px;
  height: 6px;
  background: #a03040;
  border: 1px solid #fff;
}

.handle.blue { background: #3d6bb3; }
.handle.green { background: #2d734a; width: 7px; height: 7px; }

.h-a { left: 267px; top: 387px; }
.h-b { left: 267px; top: 435px; }
.h-c { left: 448px; top: 435px; }
.h-d { left: 448px; top: 387px; }
.h-e { left: 630px; top: 387px; }
.h-f { left: 630px; top: 435px; }
.h-g { left: 846px; top: 819px; }

.cursor { left: 1042px; top: 407px; }
.arrow { left: 890px; top: 426px; }

.play {
  left: 930px;
  top: 510px;
  width: 60px;
  height: 60px;
  border-radius: 50%;
  background: #7e8289;
  display: flex;
  align-items: center;
  justify-content: center;
}

.play span {
  margin-left: 2px;
  width: 0;
  height: 0;
  border-top: 9px solid transparent;
  border-bottom: 9px solid transparent;
  border-left: 17px solid #fff;
}

.red-box {
  left: 1018px;
  top: 520px;
  width: 698px;
  height: 303px;
  border: 3px solid #f0364a;
  border-radius: 5px;
}

.callout {
  left: 1040px;
  top: 572px;
  width: 596px;
  height: 127px;
  background: #fff;
  box-shadow: 8px 10px 18px rgba(0,0,0,.22);
  font-family: "Liberation Serif", serif;
  font-weight: bold;
  font-size: 86px;
  line-height: 122px;
  padding-left: 12px;
  letter-spacing: -.6px;
  word-spacing: -2px;
  color: #1d1d1d;
  white-space: nowrap;
  -webkit-text-stroke: 1px #1d1d1d;
}

.callout-tail {
  left: 1063px;
  top: 698px;
  filter: drop-shadow(7px 7px 6px rgba(0,0,0,.28));
}

.watermark {
  left: 559px;
  top: 855px;
  font-size: 13px;
  color: #ececec;
}

.logo {
  left: 1629px;
  top: 930px;
  width: 251px;
}

.logo-top {
  height: 57px;
  display: flex;
  justify-content: space-between;
}

.logo-name {
  font-size: 63px;
  line-height: 54px;
  font-weight: 900;
  color: #2a8fdd;
}

.logo-box {
  width: 114px;
  height: 56px;
  background: #2a8fdd;
  border-radius: 6px;
  color: #fff;
  font-size: 50px;
  font-weight: 700;
  line-height: 54px;
  text-align: center;
}

.logo-site {
  margin-top: 14px;
  height: 38px;
  display: flex;
  border: 2px solid #2a8fdd;
  border-radius: 3px;
  background: #efefef;
}

.logo-url {
  flex: 1;
  font-family: Inter, sans-serif;
  font-weight: 700;
  font-size: 28px;
  line-height: 32px;
  padding-left: 7px;
  letter-spacing: .5px;
  color: #2a8fdd;
}

.logo-search {
  width: 52px;
  background: #2a8fdd;
  display: flex;
  align-items: center;
  justify-content: center;
}
```
